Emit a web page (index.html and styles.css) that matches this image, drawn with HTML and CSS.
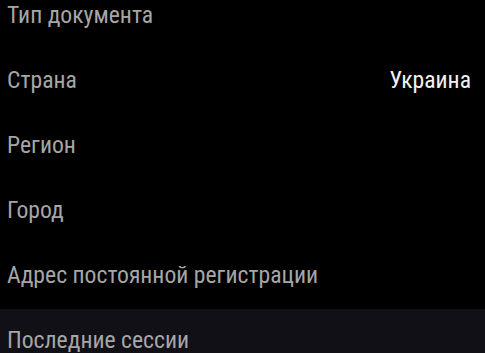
FILE: index.html
```html
<!DOCTYPE html>
<html>
	<head>
		<meta charset="UTF-8">
		<title>Профиль</title>
		<link rel="stylesheet" href="styles.css">
	</head>
	<body>
		<div class="list">
			<div class="row"><span class="label">Тип документа</span></div>
			<div class="row"><span class="label">Страна</span><span class="value">Украина</span></div>
			<div class="row"><span class="label">Регион</span></div>
			<div class="row"><span class="label">Город</span></div>
			<div class="row"><span class="label">Адрес постоянной регистрации</span></div>
			<div class="row section"><span class="label">Последние сессии</span></div>
		</div>
	</body>
</html>
```

FILE: styles.css
```css
body {
	margin: 0;
	background-color: #000000;
	font-family: Roboto, "Noto Sans", sans-serif;
	font-size: 23.7px;
	font-stretch: condensed;
	overflow: hidden;
}
.list {
	margin-top: -16px;
}
.row {
	display: flex;
	justify-content: space-between;
	align-items: flex-start;
	height: 65px;
	box-sizing: border-box;
	padding: 18px 14px 0 7px;
	line-height: 26px;
}
.label {
	color: #a6a6a6;
}
.value {
	color: #f2f2f2;
}
.section {
	background-color: #101016;
}
```
